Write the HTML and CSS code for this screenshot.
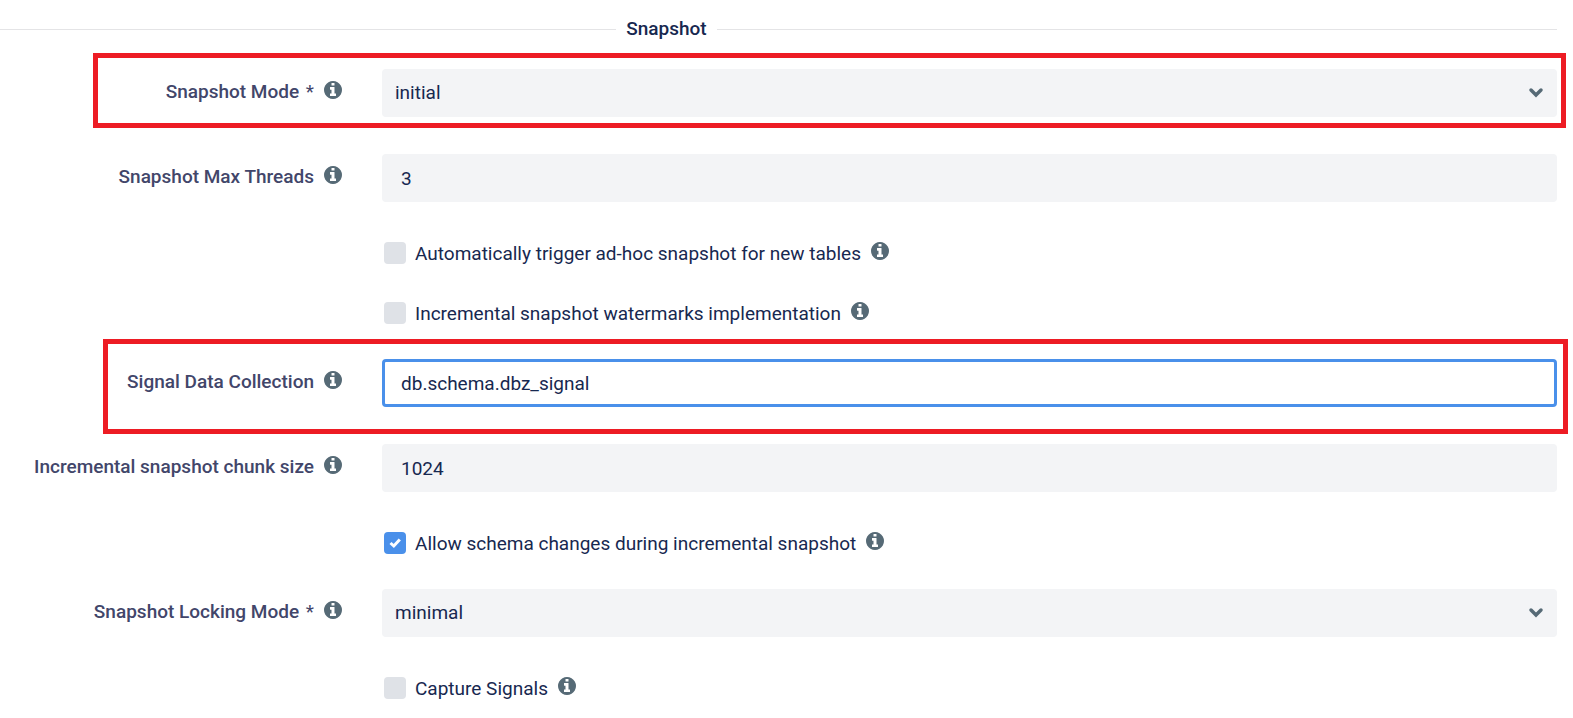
FILE: index.html
```html
<!DOCTYPE html>
<html lang="en">
<head>
    <meta charset="UTF-8">
    <meta name="viewport" content="width=device-width, initial-scale=1.0">
    <title>Snapshot Settings</title>
    <link rel="stylesheet" href="styles.css">
</head>
<body>
    <!-- shared icons -->
    <svg class="icon-defs" aria-hidden="true">
        <symbol id="info" viewBox="128 128 1536 1536">
            <path d="M1152 1376v-160q0-14-9-23t-23-9h-96v-512q0-14-9-23t-23-9h-320q-14 0-23 9t-9 23v160q0 14 9 23t23 9h96v320h-96q-14 0-23 9t-9 23v160q0 14 9 23t23 9h448q14 0 23-9t9-23zm-128-896v-160q0-14-9-23t-23-9h-192q-14 0-23 9t-9 23v160q0 14 9 23t23 9h192q14 0 23-9t9-23zm640 416q0 209-103 385.5t-279.5 279.5-385.5 103-385.5-103-279.5-279.5-103-385.5 103-385.5 279.5-279.5 385.5-103 385.5 103 279.5 279.5 103 385.5z"/>
        </symbol>
        <symbol id="chevron" viewBox="0 0 16 12">
            <path d="M3 3l5 5 5-5" fill="none" stroke="currentColor" stroke-width="3.5" stroke-linecap="round"/>
        </symbol>
        <symbol id="check" viewBox="0 0 22 22">
            <path d="M6.500 11l3.300 3 6-6.500" fill="none" stroke="currentColor" stroke-width="3"/>
        </symbol>
    </svg>

    <form class="settings">
        <h2 class="section-title">Snapshot</h2>

        <div class="form-row">
            <div class="label-cell">
                <label for="snapshotMode">Snapshot Mode <span class="required">*</span></label>
                <svg class="info-icon"><use href="#info"/></svg>
            </div>
            <div class="select-wrap">
                <select id="snapshotMode">
                    <option>initial</option>
                </select>
                <svg class="chevron"><use href="#chevron"/></svg>
            </div>
            <span class="highlight highlight-mode"></span>
        </div>

        <div class="form-row">
            <div class="label-cell">
                <label for="maxThreads">Snapshot Max Threads</label>
                <svg class="info-icon"><use href="#info"/></svg>
            </div>
            <input type="text" id="maxThreads" value="3">
        </div>

        <div class="check-row">
            <span class="check-box">
                <input type="checkbox" id="adhocSnapshot">
            </span>
            <label for="adhocSnapshot">Automatically trigger ad-hoc snapshot for new tables</label>
            <svg class="info-icon"><use href="#info"/></svg>
        </div>

        <div class="check-row">
            <span class="check-box">
                <input type="checkbox" id="watermarks">
            </span>
            <label for="watermarks">Incremental snapshot watermarks implementation</label>
            <svg class="info-icon"><use href="#info"/></svg>
        </div>

        <div class="form-row">
            <div class="label-cell">
                <label for="signalCollection">Signal Data Collection</label>
                <svg class="info-icon"><use href="#info"/></svg>
            </div>
            <input type="text" id="signalCollection" class="active" value="db.schema.dbz_signal" spellcheck="false">
            <span class="highlight highlight-signal"></span>
        </div>

        <div class="form-row">
            <div class="label-cell">
                <label for="chunkSize">Incremental snapshot chunk size</label>
                <svg class="info-icon"><use href="#info"/></svg>
            </div>
            <input type="text" id="chunkSize" value="1024">
        </div>

        <div class="check-row">
            <span class="check-box">
                <input type="checkbox" id="schemaChanges" checked>
                <svg class="check-mark"><use href="#check"/></svg>
            </span>
            <label for="schemaChanges">Allow schema changes during incremental snapshot</label>
            <svg class="info-icon"><use href="#info"/></svg>
        </div>

        <div class="form-row">
            <div class="label-cell">
                <label for="lockingMode">Snapshot Locking Mode <span class="required">*</span></label>
                <svg class="info-icon"><use href="#info"/></svg>
            </div>
            <div class="select-wrap">
                <select id="lockingMode">
                    <option>minimal</option>
                </select>
                <svg class="chevron"><use href="#chevron"/></svg>
            </div>
        </div>

        <div class="check-row">
            <span class="check-box">
                <input type="checkbox" id="captureSignals">
            </span>
            <label for="captureSignals">Capture Signals</label>
            <svg class="info-icon"><use href="#info"/></svg>
        </div>
    </form>
</body>
</html>
```
FILE: styles.css
```css
* {
    box-sizing: border-box;
}
body {
    font-family: Roboto, Arial, sans-serif;
    font-size: 19px;
    line-height: 28px;
    margin: 0;
    background-color: #fff;
    color: #172850;
}
.icon-defs {
    display: none;
}

/* section heading with a rule on each side */
.section-title {
    display: flex;
    align-items: center;
    gap: 10px;
    margin: 0 16px 26px 0;
    padding-top: 15px;
    font-size: 19px;
    font-weight: 500;
    line-height: 28px;
}
.section-title::before,
.section-title::after {
    content: "";
    flex: 11;
    height: 1px;
    background-color: #e4e4e6;
}
.section-title::after {
    flex: 15;
}

.form-row {
    position: relative;
    display: flex;
    gap: 40px;
    margin-bottom: 37px;
    padding-right: 16px;
}
.label-cell {
    display: flex;
    justify-content: flex-end;
    gap: 10px;
    width: 342px;
    flex-shrink: 0;
    padding-top: 9px;
    font-weight: 500;
    color: #42466a;
}
.required {
    margin-left: 2px;
    font-weight: 400;
}
.info-icon {
    width: 18px;
    height: 18px;
    flex-shrink: 0;
    margin-top: 3px;
    fill: #566a76;
}

input[type="text"],
select {
    width: 100%;
    height: 48px;
    min-width: 0;
    padding: 0 19px;
    border: none;
    border-radius: 4px;
    outline: none;
    background-color: #f3f4f6;
    color: #172850;
    font: inherit;
}
input[type="text"].active {
    padding: 0 16px;
    border: 3px solid #4a90ea;
    background-color: #fff;
}
.select-wrap {
    position: relative;
    flex: 1;
}
select {
    display: block;
    padding: 0 40px 0 13px;
    appearance: none;
}
.chevron {
    position: absolute;
    top: 18px;
    right: 13px;
    width: 16px;
    height: 12px;
    color: #566a76;
    pointer-events: none;
}

.check-row {
    display: flex;
    margin-bottom: 32px;
    padding-left: 384px;
}
.check-row label {
    padding-top: 1px;
    margin-bottom: -1px;
}
.check-row .info-icon {
    margin-left: 10px;
}
.check-box {
    position: relative;
    width: 22px;
    height: 22px;
    margin: 3px 9px 0 0;
}
input[type="checkbox"] {
    display: block;
    width: 22px;
    height: 22px;
    margin: 0;
    border-radius: 4px;
    background-color: #dfe2e7;
    appearance: none;
}
input[type="checkbox"]:checked {
    background-color: #4a90ea;
}
.check-mark {
    position: absolute;
    top: 0;
    left: 0;
    width: 22px;
    height: 22px;
    color: #fff;
    pointer-events: none;
}

/* red callout frames */
.highlight {
    position: absolute;
    border: 5px solid #ed1c24;
    pointer-events: none;
}
.highlight-mode {
    top: -16px;
    right: 7px;
    bottom: -11px;
    left: 93px;
}
.highlight-signal {
    top: -20px;
    right: 5px;
    bottom: -27px;
    left: 103px;
}
```
